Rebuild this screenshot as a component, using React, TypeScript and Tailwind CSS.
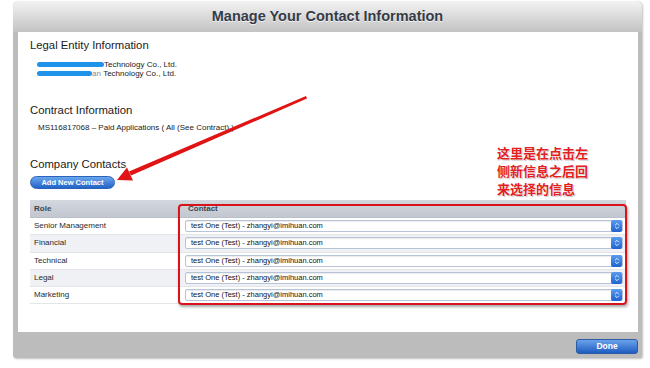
import { ChevronsUpDown } from "lucide-react";

const contacts = [
  { role: "Senior Management", striped: false },
  { role: "Financial", striped: true },
  { role: "Technical", striped: false },
  { role: "Legal", striped: true },
  { role: "Marketing", striped: false },
];

const contactLabel = "test One (Test) - zhangyi@imihuan.com";

function SelectBox() {
  return (
    <div className="flex h-[12px] items-center rounded-[2px] border border-[#b7c3d6] bg-white shadow-[inset_0_1px_1px_rgba(0,0,0,0.08)]">
      <span className="flex-1 pl-[5px] text-[7.5px] leading-[10px] text-[#111]">{contactLabel}</span>
      <span className="flex h-[12px] w-[11px] items-center justify-center rounded-[2px] bg-gradient-to-b from-[#5a9cf0] to-[#1f62d0] text-white">
        <ChevronsUpDown size={8} strokeWidth={2.5} />
      </span>
    </div>
  );
}

export default function App() {
  return (
    <div className="relative h-[368px] w-[650px] overflow-hidden bg-white font-['Liberation_Sans',Arial,sans-serif]">
      <div className="ml-[13px] w-[629px] pt-[1px]">
        <div className="flex h-[357px] flex-col rounded-t-[5px] rounded-b-[3px] bg-[#bcbcbc] shadow-[1px_1px_2px_rgba(0,0,0,0.25)]">
          {/* title bar */}
          <div className="flex h-[31px] items-center justify-center rounded-t-[5px] bg-gradient-to-b from-[#f3f3f3] to-[#c3c3c3]">
            <h1 className="text-[14.5px] font-bold text-[#353c48] [text-shadow:0_1px_0_rgba(255,255,255,0.7)]">
              Manage Your Contact Information
            </h1>
          </div>

          {/* white panel */}
          <div className="ml-[5px] mr-[4px] h-[300px] bg-white px-[12px] text-[#1a1a1a]">
            <h2 className="pt-[6px] text-[11.3px] leading-[14px]">Legal Entity Information</h2>
            <div className="mt-[8px] pl-[7px] text-[8px] leading-[9px] text-[#222]">
              <div className="flex items-center">
                <span className="inline-block h-[5px] w-[67px] rounded-full bg-[#1f92ea]" />
                <span>Technology Co., Ltd.</span>
              </div>
              <div className="flex items-center">
                <span className="inline-block h-[5px] w-[55px] rounded-full bg-[#1f92ea]" />
                <span className="text-[#8a8a8a]">an</span>
                <span>&nbsp;Technology Co., Ltd.</span>
              </div>
            </div>

            <h2 className="mt-[25px] text-[11.3px] leading-[14px]">Contract Information</h2>
            <p className="mt-[6px] pl-[8px] text-[8px] leading-[9px] text-[#222]">
              MS116817068 – Paid Applications ( All (See Contract) )
            </p>

            <h2 className="mt-[25px] text-[11.3px] leading-[14px]">Company Contacts</h2>
            <button className="mt-[5px] flex h-[13px] w-[85px] items-center justify-center rounded-full border border-[#2b63b8] bg-gradient-to-b from-[#6aa6ef] to-[#2163c8] text-[7.5px] font-bold text-white">
              Add New Contact
            </button>

            {/* contacts table */}
            <div className="mt-[11px] w-[596px] text-[8px]">
              <div className="flex h-[18px] items-center border-b border-[#b9bfc9] bg-gradient-to-b from-[#d3d7de] to-[#c2c7d0] font-bold text-[#3d4553]">
                <div className="w-[152px] pl-[4px]">Role</div>
                <div className="flex-1 pl-[6px]">Contact</div>
              </div>
              {contacts.map((c) => (
                <div
                  key={c.role}
                  className={`flex h-[17.3px] items-center border-b border-[#e3e5e9] ${c.striped ? "bg-[#eff1f4]" : "bg-white"}`}
                >
                  <div className="w-[152px] pl-[4px] text-[#2a2a2a]">{c.role}</div>
                  <div className="flex-1 pl-[3px] pr-[3px]">
                    <SelectBox />
                  </div>
                </div>
              ))}
            </div>
          </div>

          {/* bottom bar */}
          <div className="flex justify-end pr-[4px] pt-[7px]">
            <button className="flex h-[15px] w-[62px] items-center justify-center rounded-[3px] border border-[#2a5ca6] bg-gradient-to-b from-[#69a2ea] to-[#1e5cc0] text-[8.5px] font-bold text-white">
              Done
            </button>
          </div>
        </div>
      </div>

      {/* annotation: red box */}
      <div className="absolute left-[178px] top-[204px] h-[101px] w-[449px] rounded-[4px] border-[2.5px] border-[#d8131b] shadow-[1px_2px_3px_rgba(0,0,0,0.35)]" />

      {/* annotation: arrow */}
      <svg className="pointer-events-none absolute left-0 top-0" width="650" height="368" viewBox="0 0 650 368">
        <polygon points="306,96 307,98.5 131,175.5 129,171.5" fill="#e01414" />
        <polygon points="117,180 133,180.5 127,167.5" fill="#e01414" />
      </svg>

      {/* annotation: note */}
      <div className="absolute left-[497px] top-[144px] font-['Noto_Sans_CJK_SC',sans-serif] text-[13px] font-bold leading-[18px] text-[#e3201e] [text-shadow:0_0_1px_#fff,0_0_2px_#fff,1px_1px_1px_rgba(0,0,0,0.3)]">
        <div>这里是在点击左</div>
        <div>侧新信息之后回</div>
        <div>来选择的信息</div>
      </div>
    </div>
  );
}
